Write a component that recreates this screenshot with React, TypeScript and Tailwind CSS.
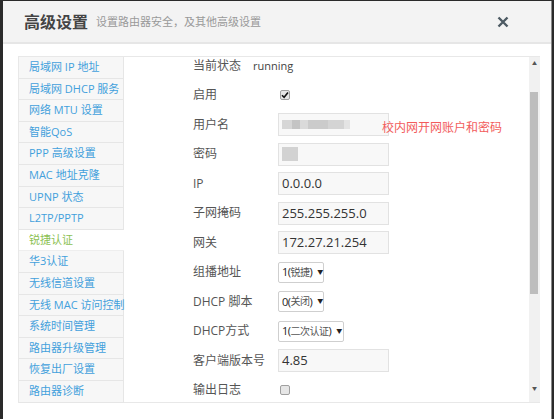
import React from "react";

const menu = [
  "局域网 IP 地址",
  "局域网 DHCP 服务",
  "网络 MTU 设置",
  "智能QoS",
  "PPP 高级设置",
  "MAC 地址克隆",
  "UPNP 状态",
  "L2TP/PPTP",
  "锐捷认证",
  "华3认证",
  "无线信道设置",
  "无线 MAC 访问控制",
  "系统时间管理",
  "路由器升级管理",
  "恢复出厂设置",
  "路由器诊断",
];

const font = { fontFamily: '"Open Sans", "Noto Sans CJK SC", sans-serif' };

function Row({ label, children }: { label: string; children?: React.ReactNode }) {
  return (
    <div className="flex h-[29.5px] items-center">
      <div className="w-[154px] shrink-0 whitespace-nowrap pl-[69px] text-[12px] text-[#555]">{label}</div>
      <div className="flex items-center">{children}</div>
    </div>
  );
}

function TextBox({ value, children }: { value?: string; children?: React.ReactNode }) {
  return (
    <div className="relative flex h-[23px] w-[111px] items-center border border-[#e2e2e2] bg-[#f8f8f8] pl-[3px] text-[13px] text-[#333]">
      {value}
      {children}
    </div>
  );
}

function Select({ value, hint, w }: { value: string; hint: string; w: string }) {
  return (
    <div
      className={`flex h-[21px] ${w} shrink-0 items-center whitespace-nowrap rounded-[2px] border border-[#cfcfcf] bg-white pl-[3px] text-[11px] tracking-[-0.5px] text-[#222]`}
    >
      <span>{value}(</span>
      <span className="text-[10px] text-[#555]">{hint}</span>
      <span>)</span>
      <span className="ml-[5px] text-[6px]">▼</span>
    </div>
  );
}

function Check({ on }: { on?: boolean }) {
  return (
    <div className="ml-[2px] flex h-[10px] w-[10px] items-center justify-center rounded-[2px] border border-[#a0a0a0] bg-[#e6e6e6]">
      {on && (
        <svg width="8" height="8" viewBox="0 0 8 8">
          <path d="M1 4.2 L3.1 6.3 L7 1.5" stroke="#111" strokeWidth="1.6" fill="none" />
        </svg>
      )}
    </div>
  );
}

export default function App() {
  return (
    <div className="h-[419px] w-[554px] overflow-hidden bg-[#2a2a2a] pl-[3px] pr-[2px] pt-[1px]" style={font}>
      <div className="h-[418px] w-[549px] border-r border-[#8a8a8a] bg-white">
        <div className="flex h-[43px] items-center border-b-2 border-[#e6e6e6] bg-[#f3f3f3] pl-[21px] pr-[42px]">
          <span className="text-[16px] font-bold text-[#444]">高级设置</span>
          <span className="ml-[8px] mt-[2px] text-[11px] text-[#999]">设置路由器安全，及其他高级设置</span>
          <svg className="ml-auto" width="12" height="12" viewBox="0 0 12 12">
            <path d="M1.5 1.5 L10.5 10.5 M10.5 1.5 L1.5 10.5" stroke="#4d5a63" strokeWidth="2.4" />
          </svg>
        </div>
        <div className="ml-[15px] mt-[12px] flex h-[347px] w-[522px] border-y border-[#e8e8e8]">
          <div className="w-[106px] shrink-0 border-l border-[#e8e8e8]">
            {menu.map((m, i) => {
              const active = i === 8;
              return (
                <div
                  key={m}
                  className={`flex h-[21.6px] items-center whitespace-nowrap border-b pl-[10px] text-[11px] ${
                    active
                      ? "border-[#eeeeee] bg-white text-[#8cc152]"
                      : "border-r border-[#e6e6e6] bg-[#f7f7f7] text-[#42a0dc]"
                  }`}
                >
                  {m}
                </div>
              );
            })}
          </div>
          <div className="flex-1 overflow-hidden">
            <div className="-mt-[6px]">
              <Row label="当前状态">
                <span className="-ml-[25px] text-[11px] text-[#444]">running</span>
              </Row>
              <Row label="启用">
                <Check on />
              </Row>
              <Row label="用户名">
                <TextBox>
                  <div className="flex h-[9px] items-center">
                    <div className="h-[9px] w-[10px] bg-[#d6d6d6]" />
                    <div className="h-[9px] w-[8px] bg-[#c4c4c4]" />
                    <div className="h-[9px] w-[8px] bg-[#dadada]" />
                    <div className="h-[9px] w-[20px] bg-[#cbcbcb]" />
                    <div className="h-[9px] w-[16px] bg-[#d4d4d4]" />
                    <div className="h-[9px] w-[6px] bg-[#e4e4e4]" />
                  </div>
                  <span className="absolute left-[103px] top-[5px] whitespace-nowrap text-[12px] text-[#f25c5c]">
                    校内网开网账户和密码
                  </span>
                </TextBox>
              </Row>
              <Row label="密码">
                <TextBox>
                  <div className="h-[14px] w-[16px] bg-[#d2d2d2]" />
                </TextBox>
              </Row>
              <Row label="IP">
                <TextBox value="0.0.0.0" />
              </Row>
              <Row label="子网掩码">
                <TextBox value="255.255.255.0" />
              </Row>
              <Row label="网关">
                <TextBox value="172.27.21.254" />
              </Row>
              <Row label="组播地址">
                <Select value="1" hint="锐捷" w="w-[46px]" />
              </Row>
              <Row label="DHCP 脚本">
                <Select value="0" hint="关闭" w="w-[46px]" />
              </Row>
              <Row label="DHCP方式">
                <Select value="1" hint="二次认证" w="w-[66px]" />
              </Row>
              <Row label="客户端版本号">
                <TextBox value="4.85" />
              </Row>
              <Row label="输出日志">
                <Check />
              </Row>
            </div>
          </div>
          <div className="relative w-[11px] shrink-0 bg-[#f1f1f1]">
            <span className="absolute left-[3px] top-[3px] text-[5px] text-[#555]">▲</span>
            <div className="absolute left-[1px] top-[35px] h-[202px] w-[8px] bg-[#bdbdbd]" />
            <span className="absolute bottom-[10px] left-[3px] text-[5px] text-[#555]">▼</span>
          </div>
        </div>
      </div>
    </div>
  );
}
